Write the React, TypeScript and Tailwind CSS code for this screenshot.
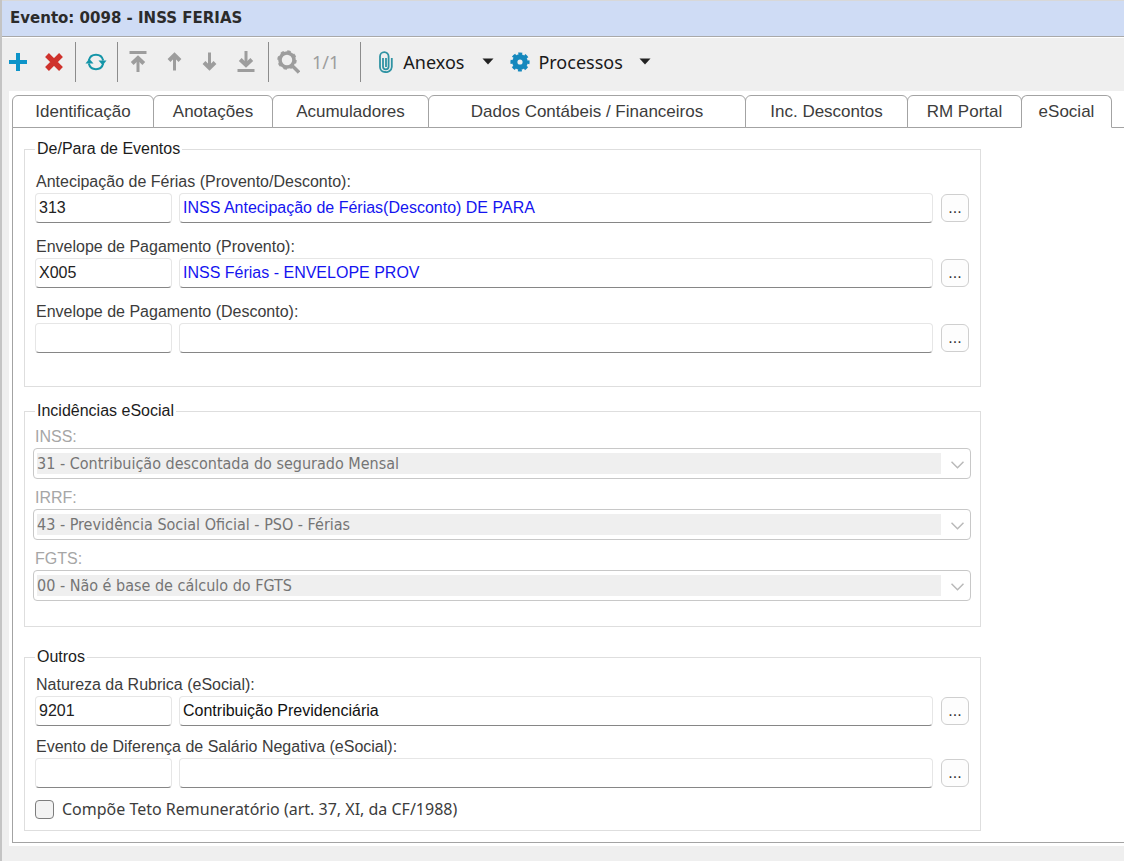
import { useState } from "react";

type Tab = {
  id: string;
  title: string;
  width: string;
};

type LookupProps = {
  id: string;
  label: string;
  code?: string;
  description?: string;
  color?: string;
};

type ComboProps = {
  id: string;
  label: string;
  value: string;
};

const tabs: Tab[] = [
  { id: "identificacao", title: "Identificação", width: "w-[142px]" },
  { id: "anotacoes", title: "Anotações", width: "w-[120px]" },
  { id: "acumuladores", title: "Acumuladores", width: "w-[157px]" },
  { id: "dados", title: "Dados Contábeis / Financeiros", width: "w-[318px]" },
  { id: "descontos", title: "Inc. Descontos", width: "w-[163px]" },
  { id: "portal", title: "RM Portal", width: "w-[115px]" },
  { id: "esocial", title: "eSocial", width: "w-[91px]" },
];

function Separator() {
  return <div className="h-10 w-px shrink-0 bg-[#8c8c8c]" />;
}

function Caret() {
  return (
    <svg width="12" height="7" viewBox="0 0 12 7" fill="#222">
      <path d="M0.5 0.5h11L6 6.5z" />
    </svg>
  );
}

function Toolbar() {
  return (
    <div className="flex h-[54px] items-center border-t border-white pb-1.5 pl-[7px] font-['Noto_Sans',sans-serif] text-lg text-[#1a1a1a]">
      <button aria-label="Novo">
        <svg width="18" height="18" viewBox="0 0 18 18" fill="none" stroke="#0d94c9" strokeWidth="4">
          <path d="M9 0v18M0 9h18" />
        </svg>
      </button>
      <button aria-label="Excluir" className="ml-[18px]">
        <svg width="18" height="18" viewBox="0 0 18 18" fill="none" stroke="#cf322c" strokeWidth="5.4">
          <path d="M2 2l14 14M16 2L2 16" />
        </svg>
      </button>
      <div className="ml-3 flex">
        <Separator />
      </div>
      <button aria-label="Atualizar" className="mr-2.5 ml-[9px]">
        <svg width="22" height="20" viewBox="0 0 22 20" fill="none" stroke="#1495a8" strokeWidth="2">
          <path d="M3.8 8.5A7.4 7.4 0 0 1 18.2 8.5" />
          <path d="M18.2 11.5A7.4 7.4 0 0 1 3.800 11.5" />
          <path d="M13.5 8.5h8l-3.800 4.800z" fill="#1495a8" stroke="none" />
          <path d="M0.5 11.5h8L4.300 6.700z" fill="#1495a8" stroke="none" />
        </svg>
      </button>
      <Separator />
      <button aria-label="Primeiro" className="ml-[11px]" disabled>
        <svg width="18" height="23" viewBox="0 0 18 23" fill="none" stroke="#9d9d9d" strokeWidth="3">
          <path d="M0.5 2.5h17M9 22V9" />
          <path d="M3.2 13.500L9 8l5.8 5.500" strokeWidth="4" />
        </svg>
      </button>
      <button aria-label="Anterior" className="ml-5" disabled>
        <svg width="15" height="19" viewBox="0 0 15 19" fill="none" stroke="#9d9d9d" strokeWidth="3">
          <path d="M7.5 18.5V4" />
          <path d="M2 8.500l5.500-5.500 5.500 5.500" strokeWidth="4" />
        </svg>
      </button>
      <button aria-label="Próximo" className="ml-5" disabled>
        <svg width="15" height="19" viewBox="0 0 15 19" fill="none" stroke="#9d9d9d" strokeWidth="3">
          <path d="M7.5 0.5V15" />
          <path d="M2 10.500l5.500 5.500 5.500-5.500" strokeWidth="4" />
        </svg>
      </button>
      <button aria-label="Último" className="ml-5" disabled>
        <svg width="18" height="23" viewBox="0 0 18 23" fill="none" stroke="#9d9d9d" strokeWidth="3">
          <path d="M0.5 20.5h17M9 1v13" />
          <path d="M3.2 9.500L9 15l5.8-5.500" strokeWidth="4" />
        </svg>
      </button>
      <div className="ml-[13px] flex">
        <Separator />
      </div>
      <button aria-label="Pesquisar" className="ml-2" disabled>
        <svg width="23" height="24" viewBox="0 0 23 24" fill="none" stroke="#9d9d9d">
          <circle cx="10" cy="10" r="7" strokeWidth="3.6" />
          <circle cx="10" cy="10" r="8.8" strokeWidth="1.8" strokeDasharray="3.456 3.456" />
          <path d="M14.500 15l7.500 7.500" strokeWidth="3.400" />
        </svg>
      </button>
      <span className="ml-3 text-[#9d9d9d]">1/1</span>
      <div className="ml-[21px] flex">
        <Separator />
      </div>
      <button className="ml-[18px] flex items-center">
        <svg width="14" height="22" viewBox="0 0 14 22" fill="none" stroke="#2f93a3" strokeWidth="1.8">
          <path d="M4 7v8.5a2.8 2.8 0 0 0 5.6 0V5.500a4.300 4.300 0 0 0-8.600 0V16a5 5 0 0 0 5 5 5.600 5.600 0 0 0 6.800-5V7" />
          <path d="M7 7v9" />
        </svg>
        <span className="ml-2.5">Anexos</span>
        <span className="ml-[18px]">
          <Caret />
        </span>
      </button>
      <button className="ml-4 flex items-center">
        <svg width="20" height="20" viewBox="0 0 20 20" fill="none" stroke="#1588bd">
          <circle cx="10" cy="10" r="5.200" strokeWidth="5.200" />
          <circle cx="10" cy="10" r="8.200" strokeWidth="2.800" strokeDasharray="3.800 2.640" strokeDashoffset="1.900" />
        </svg>
        <span className="ml-2">Processos</span>
        <span className="ml-4">
          <Caret />
        </span>
      </button>
    </div>
  );
}

function Lookup({ id, label, code = "", description = "", color = "text-[#111]" }: LookupProps) {
  return (
    <div>
      <label htmlFor={id} className="ml-px block h-[21px] leading-5 text-[#3c3c3c]">
        {label}
      </label>
      <div className="flex items-center">
        <input
          id={id}
          defaultValue={code}
          className="h-[30px] w-[137px] rounded-sm border border-[#e6e6e6] border-b-[#868686] bg-white px-[3px] text-[#222] outline-none"
        />
        <input
          aria-label={`${label} descrição`}
          defaultValue={description}
          className={`ml-[7px] h-[30px] min-w-0 flex-1 rounded-sm border border-[#e6e6e6] border-b-[#868686] bg-white px-[3px] outline-none ${color}`}
        />
        <button
          aria-label={`Procurar ${label}`}
          className="ml-2 h-7 w-7 rounded-md border border-[#cfcfcf] bg-[#fdfdfd] text-base leading-6 text-[#333]"
        >
          ...
        </button>
      </div>
    </div>
  );
}

function Combo({ id, label, value }: ComboProps) {
  return (
    <div>
      <label htmlFor={id} className="ml-0.5 block h-[21px] leading-5 text-[#a6a6a6]">
        {label}
      </label>
      <div className="relative flex h-[31px] rounded-sm border border-[#c8c8c8] bg-white py-1 pr-[29px] pl-[3px]">
        <select
          id={id}
          disabled
          className="w-full appearance-none bg-[#efefef] font-['DejaVu_Sans_Condensed',sans-serif] text-base leading-5 text-[#757575] opacity-100"
        >
          <option>{value}</option>
        </select>
        <svg
          className="pointer-events-none absolute top-3 right-1.5"
          width="13"
          height="8"
          viewBox="0 0 13 8"
          fill="none"
          stroke="#b9b9b9"
          strokeWidth="1.500"
        >
          <path d="M0.500 0.800l6 6 6-6" />
        </svg>
      </div>
    </div>
  );
}

export default function App() {
  const [activeTab, setActiveTab] = useState<string>("esocial");

  return (
    <div className="flex min-h-screen flex-col overflow-hidden border-l-2 border-[#c4c4c4] bg-[#efefef] font-['Liberation_Sans',Arial,sans-serif] text-base">
      <header className="flex h-[37px] items-center border-t border-b border-t-[#d8d8d8] border-b-[#a9a9a9] bg-[#cfdcf5] pl-2">
        <h1 className="font-['DejaVu_Sans',sans-serif] text-[15px] font-bold text-[#2b2b2b]">
          Evento: 0098 - INSS FERIAS
        </h1>
      </header>
      <Toolbar />

      <main className="ml-[7px] bg-white pt-1 pb-[3px] pl-[3px]">
        <div role="tablist" className="flex border-b border-[#a3a3a3]">
          {tabs.map((tab) => (
            <button
              key={tab.id}
              role="tab"
              aria-selected={tab.id === activeTab}
              onClick={() => setActiveTab(tab.id)}
              className={`-mr-px -mb-px h-[33px] shrink-0 rounded-t-md border border-[#a3a3a3] bg-white text-[17px] text-[#3c3c3c] ${tab.width} ${
                tab.id === activeTab ? "border-b-white" : ""
              }`}
            >
              {tab.title}
            </button>
          ))}
        </div>

        <div className="flex flex-col border-b border-l border-[#a3a3a3] px-[11px] pt-[11px] pb-[11px]">
          <fieldset className="w-full max-w-[957px] border border-[#dedede] pr-[11px] pb-[33px] pl-2.5">
            <legend className="h-5 px-[2px] leading-5 text-[#1c1c1c]">De/Para de Eventos</legend>
            <div className="flex flex-col gap-3.5 pt-[13px]">
              <Lookup
                id="antecipacao"
                label="Antecipação de Férias (Provento/Desconto):"
                code="313"
                description="INSS Antecipação de Férias(Desconto) DE PARA"
                color="text-[#1414f0]"
              />
              <Lookup
                id="provento"
                label="Envelope de Pagamento (Provento):"
                code="X005"
                description="INSS Férias - ENVELOPE PROV"
                color="text-[#1414f0]"
              />
              <Lookup id="desconto" label="Envelope de Pagamento (Desconto):" />
            </div>
          </fieldset>

          <fieldset className="mt-3.5 w-full max-w-[957px] border border-[#dedede] pr-[9px] pb-[25px] pl-2">
            <legend className="ml-0.5 h-5 px-[2px] leading-5 text-[#1c1c1c]">Incidências eSocial</legend>
            <div className="flex flex-col gap-[9px] pt-1.5">
              <Combo id="inss" label="INSS:" value="31 - Contribuição descontada do segurado Mensal" />
              <Combo id="irrf" label="IRRF:" value="43 - Previdência Social Oficial - PSO - Férias" />
              <Combo id="fgts" label="FGTS:" value="00 - Não é base de cálculo do FGTS" />
            </div>
          </fieldset>

          <fieldset className="mt-5 w-full max-w-[957px] border border-[#dedede] pr-[11px] pb-[11px] pl-2.5">
            <legend className="h-5 px-[2px] leading-5 text-[#1c1c1c]">Outros</legend>
            <div className="flex flex-col gap-[11px] pt-2">
              <Lookup
                id="natureza"
                label="Natureza da Rubrica (eSocial):"
                code="9201"
                description="Contribuição Previdenciária"
              />
              <Lookup id="diferenca" label="Evento de Diferença de Salário Negativa (eSocial):" />
              <label className="flex items-center gap-2 font-['Noto_Sans',sans-serif] text-base leading-5 text-[#3c3c3c]">
                <input
                  type="checkbox"
                  className="h-[19px] w-[19px] appearance-none rounded-sm border border-[#7d7d7d] bg-[#f3f3f3] checked:bg-[#0d94c9]"
                />
                Compõe Teto Remuneratório (art. 37, XI, da CF/1988)
              </label>
            </div>
          </fieldset>
        </div>
      </main>
    </div>
  );
}
